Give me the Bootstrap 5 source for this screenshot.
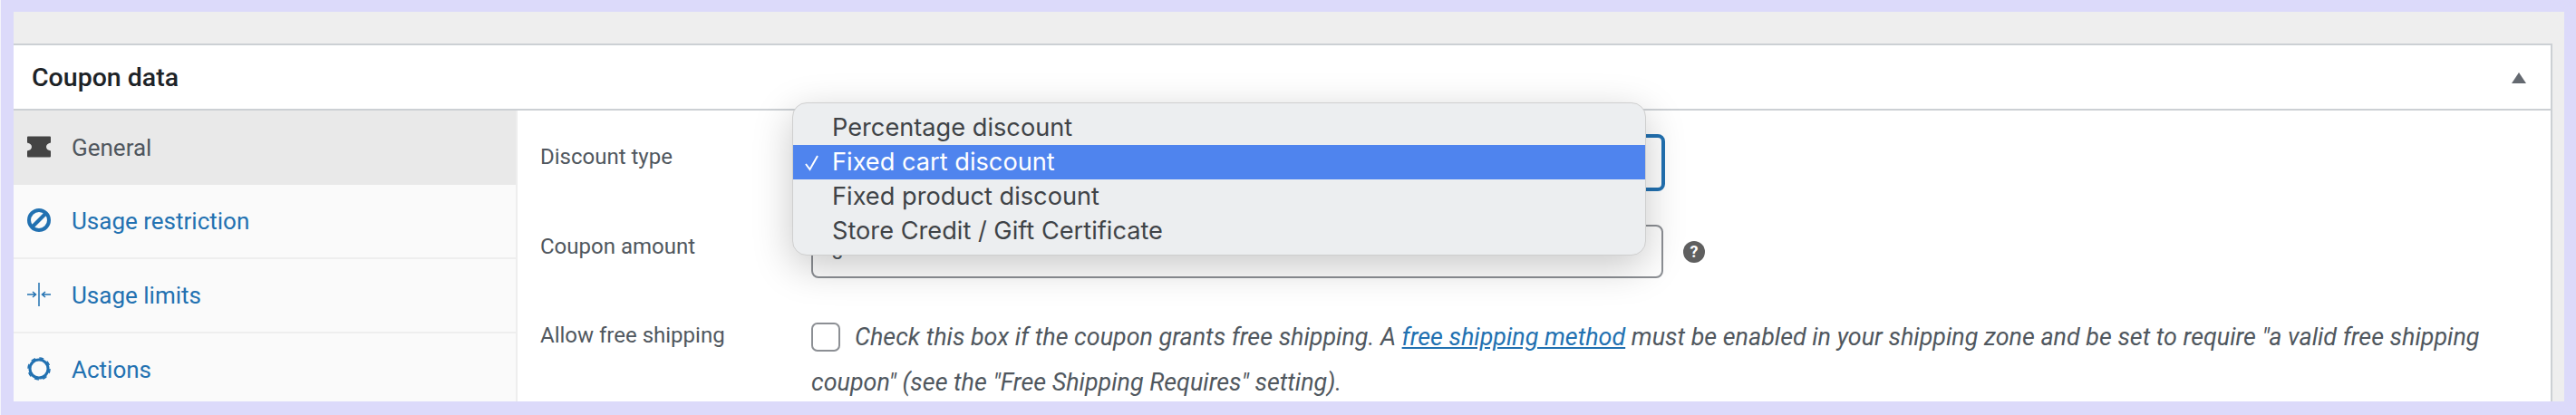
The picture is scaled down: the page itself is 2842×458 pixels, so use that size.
<!DOCTYPE html>
<html lang="en">
<head>
    <meta charset="UTF-8">
    <title>Coupon data</title>
    <link href="https://cdn.jsdelivr.net/npm/bootstrap@5.3.0/dist/css/bootstrap.min.css" rel="stylesheet">
    <style>
        html, body { height: 458px; overflow: hidden; }
        body {
            margin: 0;
            background: #dcdafa;
            font-family: Roboto, "Liberation Sans", sans-serif;
            color: #50575e;
        }
        .frame {
            height: 458px;
            padding: 13px 13px 15px 14px;
            border-left: 1px solid #f4f4fb;
        }
        .wp-bg {
            height: 100%;
            background: #eeeeee;
            padding: 35px 13px 0 0;
            overflow: hidden;
        }
        .coupon-box {
            height: 395px;
            border: 0;
            border-top: 2px solid #ccd0d4;
            border-right: 2px solid #ccd0d4;
            border-radius: 0;
            overflow: hidden;
        }
        .coupon-head {
            flex: none;
            height: 72px;
            padding: 2px 20px 0 20px;
            background: #fff;
            border-bottom: 2px solid #ccd0d4;
            border-radius: 0 !important;
            font-size: 28.5px;
            font-weight: 500;
            color: #1d2327;
        }
        .head-arrow {
            width: 16px;
            height: 12px;
            margin-right: 7px;
            fill: #646970;
        }
        .tabs-col {
            width: 556px;
            flex: none;
            background: #fafafa;
            border-right: 2px solid #eeeeee;
        }
        .tab-link {
            flex: none;
            height: 82px;
            padding: 0 0 0 15px;
            gap: 23px;
            font-size: 26px;
            color: #2271b1;
            border-bottom: 2px solid #eeeeee;
        }
        .tab-link.current { color: #50575e; background: #e9e9e9; border-bottom: 0; }
        .tab-link svg { width: 26px; height: 26px; flex: none; margin-top: -3px; }
        .panel-col { padding: 26px 0 0 25px; font-size: 24px; }
        .field-label { width: 299px; flex: none; }
        .label-type { margin-bottom: 13px; }
        .label-amount { margin-bottom: 12px; }
        .label-ship { margin-top: 5px; }
        .amount-row { margin-top: 37px; }
        .ship-row { margin-top: 40px; }
        .wp-select {
            width: 942px;
            height: 63px;
            border: 4px solid #2271b1;
            border-radius: 8px;
            background-position: right 16px center;
            background-size: 26px 20px;
            box-shadow: none;
        }
        .wp-input {
            width: 940px;
            height: 59px;
            padding: 0 20px;
            border: 2px solid #8c8f94;
            border-radius: 8px;
            font-size: 24px;
            color: #50575e;
        }
        .help-tip {
            width: 24px;
            height: 24px;
            margin-left: 22px;
            border-radius: 50%;
            background: #5f5f5f;
            color: #fff;
            font-size: 18px;
            font-weight: 700;
            line-height: 24px;
            text-align: center;
        }
        .free-ship {
            width: 1860px;
            font-size: 26.9px;
            font-style: italic;
            line-height: 50px;
        }
        .wp-check {
            width: 32px;
            height: 32px;
            margin: 0 16px 0 0;
            vertical-align: -7px;
            border: 2px solid #8c8f94;
            border-radius: 8px;
        }
        .free-ship a { color: #2271b1; }
        .native-menu {
            display: block;
            top: 113px;
            left: 874px;
            width: 942px;
            height: 169px;
            min-width: 0;
            margin: 0;
            padding: 8px 0;
            background: #eceef0;
            border: 1px solid #cfcfcf;
            border-radius: 16px;
            box-shadow: 0 12px 44px rgba(0, 0, 0, .22);
        }
        .native-menu .dropdown-item {
            height: 38px;
            padding: 0 0 0 43px;
            font-family: Inter, sans-serif;
            font-size: 27.2px;
            line-height: 37px;
            color: #3f4347;
            position: relative;
        }
        .native-menu .dropdown-item.active { background: #4f84ee; color: #fff; }
        .tick {
            position: absolute;
            left: 10px;
            top: 9px;
            width: 22px;
            height: 22px;
            fill: none;
            stroke: #fff;
            stroke-width: 2;
        }
    </style>
</head>
<body>

    <div class="frame">
        <div class="wp-bg">
            <div class="card coupon-box">
                <div class="card-header coupon-head d-flex align-items-center justify-content-between">
                    <span>Coupon data</span>
                    <svg class="head-arrow" viewBox="0 0 16 12"><path d="M8 0l8 12H0z"/></svg>
                </div>
                <div class="d-flex flex-grow-1">
                    <div class="tabs-col nav flex-column flex-nowrap">
                        <a class="nav-link tab-link current d-flex align-items-center" href="#">
                            <svg viewBox="0 0 26 26"><path fill="#444" d="M1 1.5h24q1 0 1 1v6q-5 1-5 4.500t5 4.500v6q0 1-1 1H1q-1 0-1-1v-6q5-1 5-4.500T0 8.500v-6q0-1 1-1z"/></svg>
                            General
                        </a>
                        <a class="nav-link tab-link d-flex align-items-center" href="#">
                            <svg viewBox="0 0 26 26" fill="none" stroke="#2271b1" stroke-width="4"><circle cx="13" cy="13" r="11"/><path d="M6 20L20 6"/></svg>
                            Usage restriction
                        </a>
                        <a class="nav-link tab-link d-flex align-items-center" href="#">
                            <svg viewBox="0 0 26 26" fill="none" stroke="#2271b1" stroke-width="1.500"><path d="M13 0v26M0 13h9M6 10l3.500 3L6 16M26 13h-9M20 10l-3.500 3 3.500 3"/></svg>
                            Usage limits
                        </a>
                        <a class="nav-link tab-link d-flex align-items-center" href="#">
                            <svg viewBox="0 0 26 26" fill="none" stroke="#2271b1"><circle cx="13" cy="13" r="10" stroke-width="3"/><circle cx="13" cy="13" r="12" stroke-width="1.500" stroke-dasharray="5 4.420"/></svg>
                            Actions
                        </a>
                    </div>
                    <div class="panel-col flex-grow-1">
                        <div class="d-flex align-items-center">
                            <label class="field-label label-type">Discount type</label>
                            <select class="form-select wp-select"><option>Fixed cart discount</option></select>
                        </div>
                        <div class="d-flex align-items-center amount-row">
                            <label class="field-label label-amount">Coupon amount</label>
                            <input class="form-control wp-input" type="text" value="0">
                            <span class="help-tip">?</span>
                        </div>
                        <div class="d-flex ship-row">
                            <label class="field-label label-ship">Allow free shipping</label>
                            <div class="free-ship">
                                <input class="form-check-input wp-check" type="checkbox">Check this box if the coupon grants free shipping. A <a href="#">free shipping method</a> must be enabled in your shipping zone and be set to require "a valid free shipping coupon" (see the "Free Shipping Requires" setting).
                            </div>
                        </div>
                    </div>
                </div>
            </div>
        </div>
    </div>

    <div class="dropdown-menu native-menu">
        <a class="dropdown-item" href="#">Percentage discount</a>
        <a class="dropdown-item active" href="#"><svg class="tick" viewBox="0 0 22 22"><path d="M4 12l4.500 6L17 3"/></svg>Fixed cart discount</a>
        <a class="dropdown-item" href="#">Fixed product discount</a>
        <a class="dropdown-item" href="#">Store Credit / Gift Certificate</a>
    </div>

    <script src="https://cdn.jsdelivr.net/npm/bootstrap@5.3.0/dist/js/bootstrap.bundle.min.js"></script>
</body>
</html>
